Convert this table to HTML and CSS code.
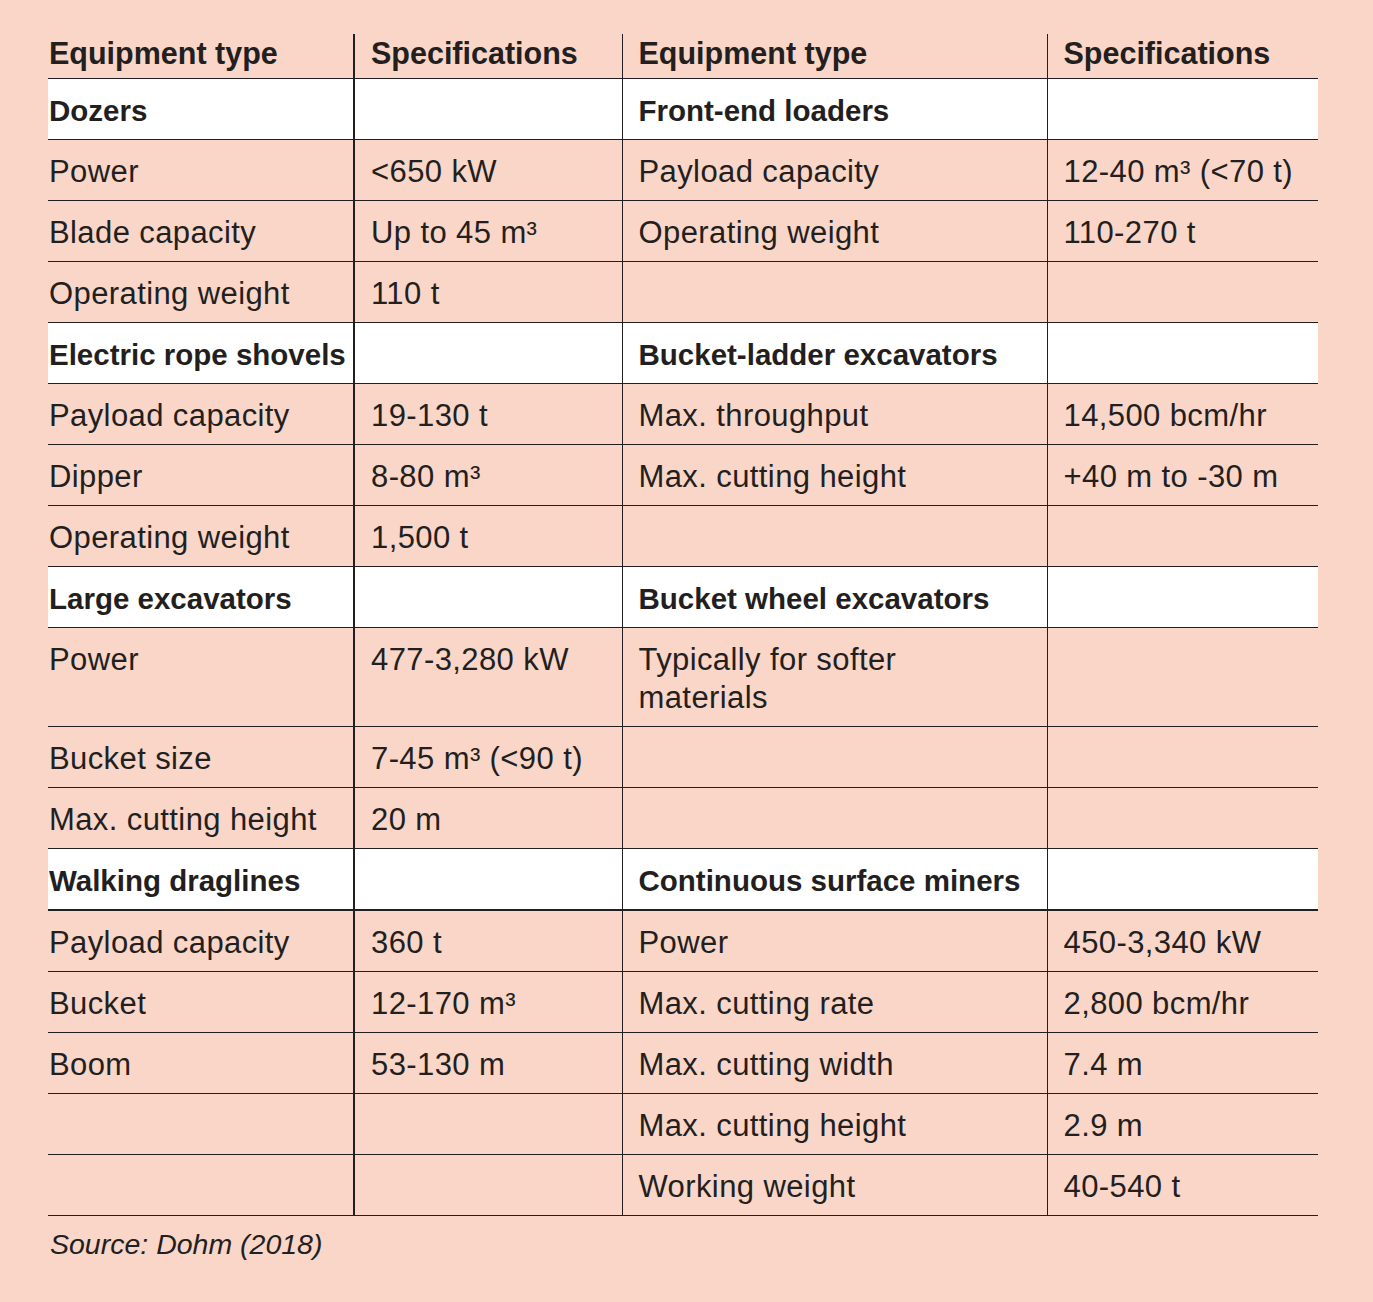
FILE: index.html
```html
<!DOCTYPE html>
<html lang="en">
<head>
<meta charset="utf-8">
<title>Equipment specifications</title>
<link rel="stylesheet" href="styles.css">
</head>
<body>
<div class="page">
  <table class="spec">
    <colgroup>
      <col class="c1"><col class="c2"><col class="c3"><col class="c4">
    </colgroup>
    <thead>
      <tr>
        <th class="k">Equipment type</th>
        <th class="v">Specifications</th>
        <th class="k2">Equipment type</th>
        <th class="v">Specifications</th>
      </tr>
    </thead>
    <tbody>
      <tr>
        <td class="k cat">Dozers</td><td class="v cat"></td>
        <td class="k2 cat">Front-end loaders</td><td class="v cat"></td>
      </tr>
      <tr>
        <td class="k">Power</td><td class="v">&lt;650 kW</td>
        <td class="k2">Payload capacity</td><td class="v">12-40 m³ (&lt;70 t)</td>
      </tr>
      <tr>
        <td class="k">Blade capacity</td><td class="v">Up to 45 m³</td>
        <td class="k2">Operating weight</td><td class="v">110-270 t</td>
      </tr>
      <tr>
        <td class="k">Operating weight</td><td class="v">110 t</td>
        <td class="k2"></td><td class="v"></td>
      </tr>
      <tr>
        <td class="k cat">Electric rope shovels</td><td class="v cat"></td>
        <td class="k2 cat">Bucket-ladder excavators</td><td class="v cat"></td>
      </tr>
      <tr>
        <td class="k">Payload capacity</td><td class="v">19-130 t</td>
        <td class="k2">Max. throughput</td><td class="v">14,500 bcm/hr</td>
      </tr>
      <tr>
        <td class="k">Dipper</td><td class="v">8-80 m³</td>
        <td class="k2">Max. cutting height</td><td class="v">+40 m to -30 m</td>
      </tr>
      <tr>
        <td class="k">Operating weight</td><td class="v">1,500 t</td>
        <td class="k2"></td><td class="v"></td>
      </tr>
      <tr>
        <td class="k cat">Large excavators</td><td class="v cat"></td>
        <td class="k2 cat">Bucket wheel excavators</td><td class="v cat"></td>
      </tr>
      <tr>
        <td class="k">Power</td><td class="v">477-3,280 kW</td>
        <td class="k2">Typically for softer<br>materials</td><td class="v"></td>
      </tr>
      <tr>
        <td class="k">Bucket size</td><td class="v">7-45 m³ (&lt;90 t)</td>
        <td class="k2"></td><td class="v"></td>
      </tr>
      <tr>
        <td class="k">Max. cutting height</td><td class="v">20 m</td>
        <td class="k2"></td><td class="v"></td>
      </tr>
      <tr class="thick">
        <td class="k cat">Walking draglines</td><td class="v cat"></td>
        <td class="k2 cat">Continuous surface miners</td><td class="v cat"></td>
      </tr>
      <tr>
        <td class="k">Payload capacity</td><td class="v">360 t</td>
        <td class="k2">Power</td><td class="v">450-3,340 kW</td>
      </tr>
      <tr>
        <td class="k">Bucket</td><td class="v">12-170 m³</td>
        <td class="k2">Max. cutting rate</td><td class="v">2,800 bcm/hr</td>
      </tr>
      <tr>
        <td class="k">Boom</td><td class="v">53-130 m</td>
        <td class="k2">Max. cutting width</td><td class="v">7.4 m</td>
      </tr>
      <tr>
        <td class="k"></td><td class="v"></td>
        <td class="k2">Max. cutting height</td><td class="v">2.9 m</td>
      </tr>
      <tr>
        <td class="k"></td><td class="v"></td>
        <td class="k2">Working weight</td><td class="v">40-540 t</td>
      </tr>
    </tbody>
  </table>
  <p class="source">Source: Dohm (2018)</p>
</div>
</body>
</html>
```

FILE: styles.css
```css
html, body {
  margin: 0;
  padding: 0;
  background: #f9d6c8;
}

body {
  color: #231f20;
  font-family: "Liberation Sans", Arial, sans-serif;
}

.page {
  width: 1373px;
  height: 1302px;
  padding: 34px 0 0 48px;
  box-sizing: border-box;
}

.spec {
  border-collapse: collapse;
  table-layout: fixed;
  width: 1270px;
}

.c1 { width: 306px; }
.c2 { width: 268px; }
.c3 { width: 425px; }
.c4 { width: 271px; }

.spec th,
.spec td {
  text-align: left;
  vertical-align: top;
  line-height: 38px;
  padding: 13px 0 9px 16px;
  border-bottom: 1px solid #231f20;
  white-space: nowrap;
}

.spec td {
  font-size: 31px;
  font-weight: 400;
  letter-spacing: 0.4px;
}

.spec th {
  font-size: 30.5px;
  font-weight: 700;
  padding-top: 0;
  padding-bottom: 6px;
}

.spec .k {
  padding-left: 1px;
  border-right: 2px solid #231f20;
}

.spec .k2 {
  border-right: 1px solid #231f20;
}

.spec td.cat {
  background: #ffffff;
  font-size: 29.5px;
  font-weight: 700;
  letter-spacing: 0;
}

.spec th.v:nth-child(2),
.spec td.v:nth-child(2) {
  border-right: 1px solid #231f20;
}

.spec tr.thick td {
  border-bottom: 2px solid #231f20;
}

.source {
  margin: 9px 0 0 2px;
  font-size: 28.5px;
  font-style: italic;
  line-height: 38px;
}
```
